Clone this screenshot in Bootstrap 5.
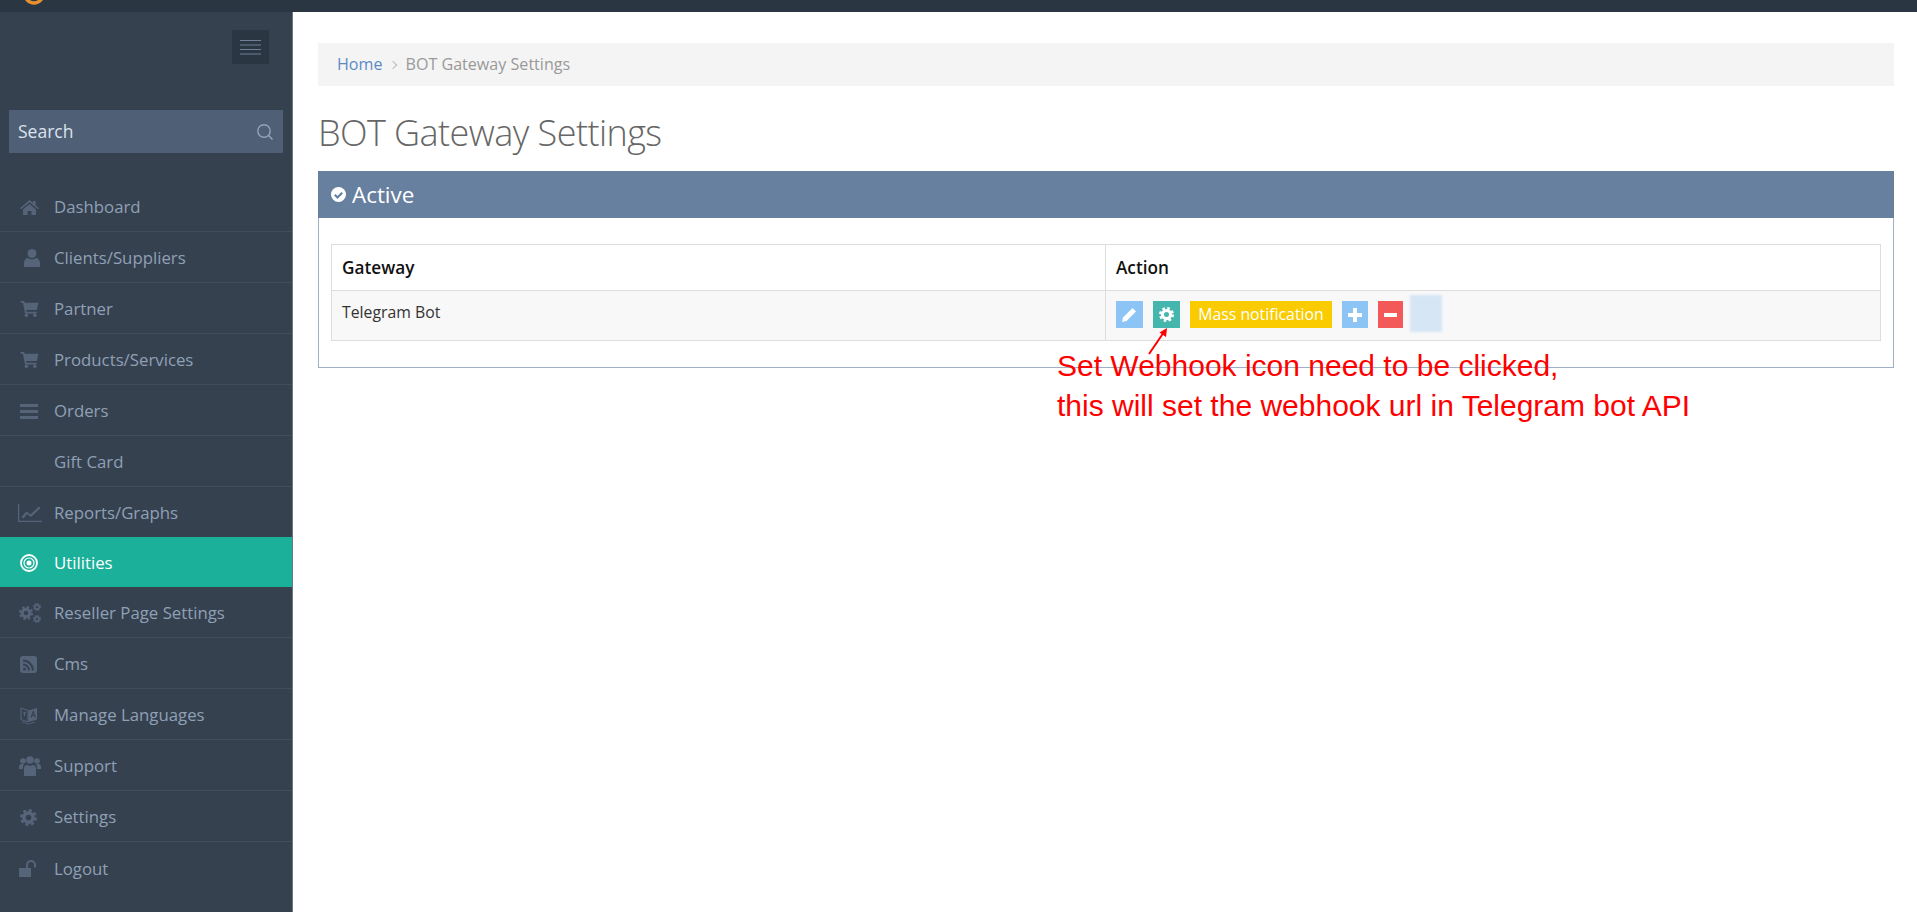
<!DOCTYPE html>
<html lang="en">
<head>
<meta charset="utf-8">
<title>BOT Gateway Settings</title>
<link href="https://cdn.jsdelivr.net/npm/bootstrap@5.3.0/dist/css/bootstrap.min.css" rel="stylesheet">
<style>
html,body{height:912px;overflow:hidden}
body{font-family:"Open Sans",sans-serif;font-size:14px;color:#333;background:#fff}
.topstrip{height:12px;background:#2b3643;overflow:hidden;position:relative}
.logo-arc{display:block;margin-left:23px;margin-top:-15px}
.shell{height:900px}
.side{width:293px;flex:none;background:#364150;border-right:1px solid #6d7683}
.side-toggle{width:37px;height:34px;margin:18px 23px 0 auto;background:#2b3643}
.side-search{margin:46px 9px 28px;height:43px;background:#4f5f75;color:#dbe3ee;font-size:17.5px;padding:0 9px}
.menu-row{height:51px;padding-left:20px;padding-top:2px;border-bottom:1px solid #414d5d;color:#8fa0b5;font-size:16.8px}
.menu-row.on{background:#1bb099;color:#fff;border-bottom:0;height:50px;margin-top:-1px}
.mi{width:34px;flex:none;display:flex}
.mi svg{fill:#56647a;display:block}
.on .mi svg{fill:#fff}
.main{padding:31px 23px 0 25px;position:relative;min-width:0}
.crumbs{background:#f4f4f4;height:43px;padding:0 19px;margin:0;font-size:16.1px;color:#999}
.crumbs a{color:#5b8bc4;text-decoration:none}
.crumb-sep{width:6px;height:6px;border-top:1px solid #bbb;border-right:1px solid #bbb;transform:rotate(45deg);margin:0 9px 0 8px}
.page-h{font-size:36px;font-weight:300;color:#666;letter-spacing:-.55px;line-height:49px;margin:22px 0 14px}
.pbox{border:1px solid #9fb0c6;border-radius:0;height:197px}
.pbox-head{background:#67809f;color:#fff;height:47px;font-size:22.4px;padding:0 13px;margin:-1px -1px 0;border:0;border-radius:0!important;gap:6px}
.pbox-body{padding:26px 12px 0}
.gw-table{margin:0;border-color:#ddd;color:#333;font-size:15.8px;table-layout:fixed}
.gw-table th{height:46px;padding:0 10px;vertical-align:middle;color:#111;font-weight:600;font-size:17.2px}
.gw-table th.gw-first{width:774px}
.gw-table td{height:50px;padding:10px;vertical-align:top;background:#f8f8f8;box-shadow:none}
.gw-table td.acts{padding:4px 10px 0}
.action-row{gap:10px}
.ab{height:27px;width:27px;margin-top:6px;color:#fff}
.ab svg{fill:#fff;display:block}
.ab-blue{background:#8cc4f5}
.ab-teal{background:#44b6ae}
.ab-yellow{background:#facc00;width:142px;font-size:15.8px}
.ab-red{background:#f35958;width:25px}
.ab-ghost{width:32px;height:37px;margin-top:0;margin-left:-3px;background:#d6e6f5;filter:blur(1px)}
.note{position:absolute;left:764px;top:334px;color:#f00;font-family:"Liberation Sans",Arial,sans-serif;font-size:30px;line-height:40px;white-space:nowrap}
.arrow{position:absolute;left:852px;top:313px}
</style>
</head>
<body>
<svg width="0" height="0" class="position-absolute">
<defs>
<symbol id="gear" viewBox="0 0 24 24">
<circle cx="12" cy="12" r="6.5" fill="none" stroke="currentColor" stroke-width="5"/>
<circle cx="12" cy="12" r="10" fill="none" stroke="currentColor" stroke-width="4" stroke-dasharray="4.2 3.65"/>
</symbol>
<symbol id="cart" viewBox="0 0 20 18">
<path d="M0 0h4l.6 2H20l-1.8 8H6.2l.4 2H18v2H5L2.600 2H0z"/><circle cx="6.500" cy="16" r="2"/><circle cx="16" cy="16" r="2"/>
</symbol>
</defs>
</svg>
<div class="topstrip"><svg class="logo-arc" width="22" height="20" viewBox="0 0 22 20"><circle cx="11" cy="9" r="9" fill="none" stroke="#e8902e" stroke-width="3.500"/></svg></div>
<div class="shell d-flex">
<aside class="side d-flex flex-column">
<div class="side-toggle d-flex flex-column justify-content-center align-items-center gap-1">
<svg width="21" height="18" viewBox="0 0 21 18"><path d="M0 2.500h21M0 7h21M0 11.500h21M0 16h21" stroke="#6f7f95" stroke-width="1"/></svg>
</div>
<div class="side-search d-flex align-items-center justify-content-between">
<span>Search</span>
<svg width="18" height="18" viewBox="0 0 18 18"><circle cx="8" cy="8" r="6.200" fill="none" stroke="#93a3b8" stroke-width="1.400"/><path d="M12.500 12.500l4 4" stroke="#93a3b8" stroke-width="1.600"/></svg>
</div>
<nav class="d-flex flex-column">
<div class="menu-row d-flex align-items-center"><span class="mi"><svg width="19" height="15" viewBox="0 0 19 15"><path d="M9.500 0l3.500 3V1h2.500v4.200L19 8.200l-1 1-8.500-7-8.500 7-1-1zM3 9.500l6.500-5.500 6.500 5.500V15h-4.500v-4h-4v4H3z"/></svg></span>Dashboard</div>
<div class="menu-row d-flex align-items-center"><span class="mi"><svg class="ms-1" width="16" height="18" viewBox="0 0 16 18"><circle cx="8" cy="4.500" r="4.500"/><path d="M0 18v-4c0-3 2.500-5 4-5 1 .8 2.500 1.300 4 1.300s3-.5 4-1.300c1.500 0 4 2 4 5v4z"/></svg></span>Clients/Suppliers</div>
<div class="menu-row d-flex align-items-center"><span class="mi"><svg width="19" height="16"><use href="#cart"/></svg></span>Partner</div>
<div class="menu-row d-flex align-items-center"><span class="mi"><svg width="19" height="16"><use href="#cart"/></svg></span>Products/Services</div>
<div class="menu-row d-flex align-items-center"><span class="mi"><svg width="18" height="15" viewBox="0 0 18 15"><path d="M0 0h18v3H0zM0 6h18v3H0zM0 12h18v3H0z"/></svg></span>Orders</div>
<div class="menu-row d-flex align-items-center"><span class="mi"></span>Gift Card</div>
<div class="menu-row d-flex align-items-center"><span class="mi"><svg width="24" height="18" viewBox="0 0 24 18" style="margin-left:-2px"><path d="M0 0h1.200v16.800H24V18H0z"/><path d="M3.500 13l5-5.500 4 3L21 2.500l1.500 1.500-9.500 9-4-3-3.500 4.500z"/></svg></span>Reports/Graphs</div>
<div class="menu-row on d-flex align-items-center"><span class="mi"><svg width="18" height="18" viewBox="0 0 18 18"><circle cx="9" cy="9" r="8" fill="none" stroke="#fff" stroke-width="1.800"/><circle cx="9" cy="9" r="5" fill="none" stroke="#fff" stroke-width="1.200"/><circle cx="9" cy="9" r="2.500" fill="#fff"/></svg></span>Utilities</div>
<div class="menu-row d-flex align-items-center"><span class="mi" style="color:#56647a"><svg width="22" height="20" viewBox="0 0 22 20" style="margin-left:-1px"><use href="#gear" x="0" y="3" width="14" height="14"/><use href="#gear" x="14" y="0" width="8" height="8"/><use href="#gear" x="14" y="12" width="8" height="8"/></svg></span>Reseller Page Settings</div>
<div class="menu-row d-flex align-items-center"><span class="mi"><svg width="17" height="17" viewBox="0 0 17 17"><path fill-rule="evenodd" d="M3 0h11a3 3 0 0 1 3 3v11a3 3 0 0 1-3 3H3a3 3 0 0 1-3-3V3a3 3 0 0 1 3-3zM3 7.500v2a5 5 0 0 1 5 5h2a7 7 0 0 0-7-7zM3 3.500v2a9 9 0 0 1 9 9h2a11 11 0 0 0-11-11zM4.500 11.500a1.500 1.500 0 1 0 0 3 1.500 1.500 0 0 0 0-3z"/></svg></span>Cms</div>
<div class="menu-row d-flex align-items-center"><span class="mi"><svg width="18" height="20" viewBox="0 0 18 20"><path d="M1 3l7 2.500V17l-7-2.500z" fill="none" stroke="#56647a" stroke-width="1"/><path d="M3 8h3M4.500 7v4" stroke="#56647a" fill="none"/><path fill-rule="evenodd" d="M8.500 5.500L17 3v11.500L8.500 17zM13 5.500l-2.500 7h1.300l.5-1.500h1.900l.5 1.500h1.200l-2.400-7zM13 7.800l.6 2.200h-1.200z"/><path d="M2 17l6.500 2 6.500-2" fill="none" stroke="#56647a" stroke-width=".8"/></svg></span>Manage Languages</div>
<div class="menu-row d-flex align-items-center"><span class="mi"><svg width="22" height="20" viewBox="0 0 22 20" style="margin-left:-1px"><circle cx="4" cy="5" r="2.800"/><circle cx="18" cy="5" r="2.800"/><circle cx="11" cy="4" r="3.800"/><path d="M0 13V10.500C0 9 1 8 2.500 8H5c-.8 1-1.200 2.500-1 5zM22 13v-2.500C22 9 21 8 19.500 8H17c.8 1 1.200 2.500 1 5zM5 20v-7.500C5 10 6.500 9 8 9c1.500 1 4.500 1 6 0 1.500 0 3 1 3 3.500V20z"/></svg></span>Support</div>
<div class="menu-row d-flex align-items-center"><span class="mi" style="color:#56647a"><svg width="17" height="17"><use href="#gear"/></svg></span>Settings</div>
<div class="menu-row d-flex align-items-center border-0"><span class="mi"><svg width="19" height="17" viewBox="0 0 19 17" style="margin-left:-1px"><path d="M0 8h12v9H0z"/><path d="M7 9V5a5 5 0 0 1 10 0v2.500h-2V5a3 3 0 0 0-6 0v4z"/></svg></span>Logout</div>
</nav>
</aside>
<main class="main flex-grow-1">
<div class="crumbs d-flex align-items-center"><a href="#">Home</a><span class="crumb-sep"></span><span>BOT Gateway Settings</span></div>
<h1 class="page-h">BOT Gateway Settings</h1>
<div class="card pbox">
<div class="card-header pbox-head d-flex align-items-center">
<svg width="15" height="15" viewBox="0 0 15 15"><circle cx="7.500" cy="7.500" r="7.500" fill="#fff"/><path d="M3.800 7.800l2.700 2.700 4.700-4.700" fill="none" stroke="#67809f" stroke-width="2.200"/></svg>
<span>Active</span>
</div>
<div class="pbox-body">
<table class="table table-bordered gw-table">
<thead><tr><th class="gw-first">Gateway</th><th>Action</th></tr></thead>
<tbody><tr><td>Telegram Bot</td><td class="acts">
<div class="d-flex align-items-start action-row">
<span class="ab ab-blue d-flex align-items-center justify-content-center"><svg width="15" height="15" viewBox="0 0 15 15"><path d="M0 15l1-4.500L10.500 1l3.500 3.500L4.500 14z"/></svg></span>
<span class="ab ab-teal d-flex align-items-center justify-content-center"><svg width="15" height="15"><use href="#gear"/></svg></span>
<span class="ab ab-yellow d-flex align-items-center justify-content-center">Mass notification</span>
<span class="ab ab-blue d-flex align-items-center justify-content-center" style="width:26px"><svg width="14" height="14" viewBox="0 0 14 14"><path d="M5 0h4v5h5v4H9v5H5V9H0V5h5z"/></svg></span>
<span class="ab ab-red d-flex align-items-center justify-content-center"><svg width="13" height="4" viewBox="0 0 13 4"><path d="M0 0h13v4H0z"/></svg></span>
<span class="ab ab-ghost"></span>
</div>
</td></tr></tbody>
</table>
</div>
</div>
<svg class="arrow" width="26" height="32" viewBox="0 0 26 32"><path d="M4 29L19 7" stroke="#f00" stroke-width="2" fill="none"/><path d="M22 3l-1 9-6.500-4.500z" fill="#f00"/></svg>
<div class="note">Set Webhook icon need to be clicked,<br>this will set the webhook url in Telegram bot API</div>
</main>
</div>
<script src="https://cdn.jsdelivr.net/npm/bootstrap@5.3.0/dist/js/bootstrap.bundle.min.js"></script>
</body>
</html>
